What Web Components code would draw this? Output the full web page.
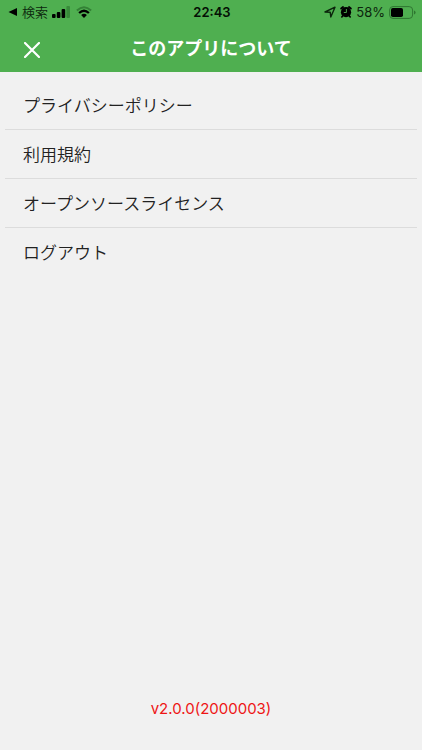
<!DOCTYPE html>
<html lang="ja">
<head>
<meta charset="utf-8">
<meta name="viewport" content="width=device-width, initial-scale=1">
<title>このアプリについて</title>
<style>
html, body { height: 100%; }
body { margin: 0; background: #f1f1f1; color: #222; font-family: Inter, "Noto Sans CJK JP", sans-serif; }
about-page { height: 100%; }
</style>
</head>
<body>
<about-page>
  <status-bar slot="top" back="検索" time="22:43" battery="58%"></status-bar>
  <nav-header slot="top">このアプリについて</nav-header>
  <menu-list>
    <menu-row>プライバシーポリシー</menu-row>
    <menu-row>利用規約</menu-row>
    <menu-row>オープンソースライセンス</menu-row>
    <menu-row>ログアウト</menu-row>
  </menu-list>
  <version-label slot="bottom">v2.0.0(2000003)</version-label>
</about-page>
<script>
const define = (name, html) => {
  customElements.define(name, class extends HTMLElement {
    constructor() {
      super();
      this.attachShadow({ mode: 'open' }).innerHTML = html;
    }
    connectedCallback() {
      this.shadowRoot.querySelectorAll('[data-attr]').forEach(el => {
        el.textContent = this.getAttribute(el.dataset.attr);
      });
    }
  });
};

define('about-page', `
<style>
:host { display: flex; flex-direction: column; }
header { background: #4faf50; }
main { flex: 1; padding: 9px 5px 0; }
</style>
<header><slot name="top"></slot></header>
<main><slot></slot></main>
<footer><slot name="bottom"></slot></footer>`);

define('status-bar', `
<style>
:host { display: grid; grid-template-columns: 1fr auto 1fr; align-items: center; height: 24px; padding: 0 6px 0 8px; color: #0b250c; font-size: 13px; line-height: 24px; }
.side { display: flex; align-items: center; gap: 4px; }
.end { justify-content: flex-end; }
button { display: flex; align-items: center; gap: 4px; border: 0; padding: 0; background: none; color: inherit; font: inherit; font-weight: 350; }
time { font-weight: 600; color: #041004; }
svg { display: block; flex: none; }
.wifi { margin-left: 2px; }
</style>
<div class="side">
  <button type="button"><svg width="10" height="10" viewBox="0 0 10 10" aria-hidden="true"><path d="M0.5 5 9 1v8z" fill="#000"/></svg><span data-attr="back"></span></button>
  <svg width="18" height="12" viewBox="0 0 18 12" aria-hidden="true"><g fill="#000"><rect x="0" y="8" width="3.6" height="4" rx="1"/><rect x="4.8" y="6" width="3.6" height="6" rx="1"/><rect x="9.6" y="3" width="3.6" height="9" rx="1"/></g><rect x="14.4" y="0" width="3.6" height="12" rx="1" fill="#388a3a"/></svg>
  <svg class="wifi" width="16" height="12" viewBox="0 0 16 12" aria-hidden="true"><path d="M.9 4.5Q8-2 15.1 4.5" fill="none" stroke="#348236" stroke-width="2.1"/><path d="M3.1 7Q8 2.4 12.9 7" fill="none" stroke="#000" stroke-width="2.3"/><path d="M5.1 9Q8 6.6 10.9 9L8 12z" fill="#000"/></svg>
</div>
<time data-attr="time"></time>
<div class="side end">
  <svg width="12" height="12" viewBox="0 0 12 12" aria-hidden="true"><path d="M1 6 11 1.2 6.8 11 6.2 6.2z" fill="none" stroke="#0b250c" stroke-width="1.4" stroke-linejoin="round"/></svg>
  <svg width="12" height="12" viewBox="0 0 12 12" aria-hidden="true"><circle cx="6" cy="6.2" r="5.1" fill="#000"/><path d="M1.2 2.6 3 1.1M10.8 2.6 9 1.1" stroke="#000" stroke-width="1.9" stroke-linecap="round"/><path d="M2.8 9.8 1.8 11M9.2 9.8l1 1.2" stroke="#000" stroke-width="1.6" stroke-linecap="round"/><path d="M6.4 3v3.5H3.8" fill="none" stroke="#4faf50" stroke-width=".9"/></svg>
  <span data-attr="battery"></span>
  <svg width="27" height="13" viewBox="0 0 27 13" aria-hidden="true"><rect x=".6" y=".6" width="23" height="11.8" rx="3.4" fill="none" stroke="#2f7531"/><rect x="2" y="2" width="12" height="9" rx="1.8" fill="#000"/><path d="M25 4.5v4q1.6-.5 1.6-2T25 4.5" fill="#2f7531"/></svg>
</div>`);

define('nav-header', `
<style>
:host { display: grid; grid-template-columns: 48px 1fr 48px; height: 48px; padding: 0 8px; color: #fff; }
button { display: grid; place-items: center; height: 48px; border: 0; padding: 4px 0 0; background: none; color: inherit; }
h1 { margin: 0; padding-top: 11px; text-align: center; font: 700 18px/24px "Noto Sans CJK JP", sans-serif; }
svg { display: block; }
</style>
<button type="button" aria-label="閉じる"><svg width="16" height="16" viewBox="0 0 16 16" aria-hidden="true"><path d="M1 1l14 14M15 1 1 15" stroke="currentColor" stroke-width="2.2" stroke-linecap="round"/></svg></button>
<h1><slot></slot></h1>`);

define('menu-list', `
<style>
:host { display: flex; flex-direction: column; }
::slotted(:not(:last-child)) { border-bottom: 1px solid #dcdcdc; }
</style>
<slot></slot>`);

define('menu-row', `
<style>
:host { display: block; }
button { display: block; width: 100%; height: 48px; border: 0; padding: 0 18px; background: none; color: inherit; text-align: left; font: 350 17px/24px "Noto Sans CJK JP", sans-serif; }
</style>
<button type="button"><slot></slot></button>`);

define('version-label', `
<style>
:host { display: block; padding-bottom: 29px; color: #ee1515; text-align: center; font-size: 15px; line-height: 24px; }
</style>
<slot></slot>`);
</script>
</body>
</html>
